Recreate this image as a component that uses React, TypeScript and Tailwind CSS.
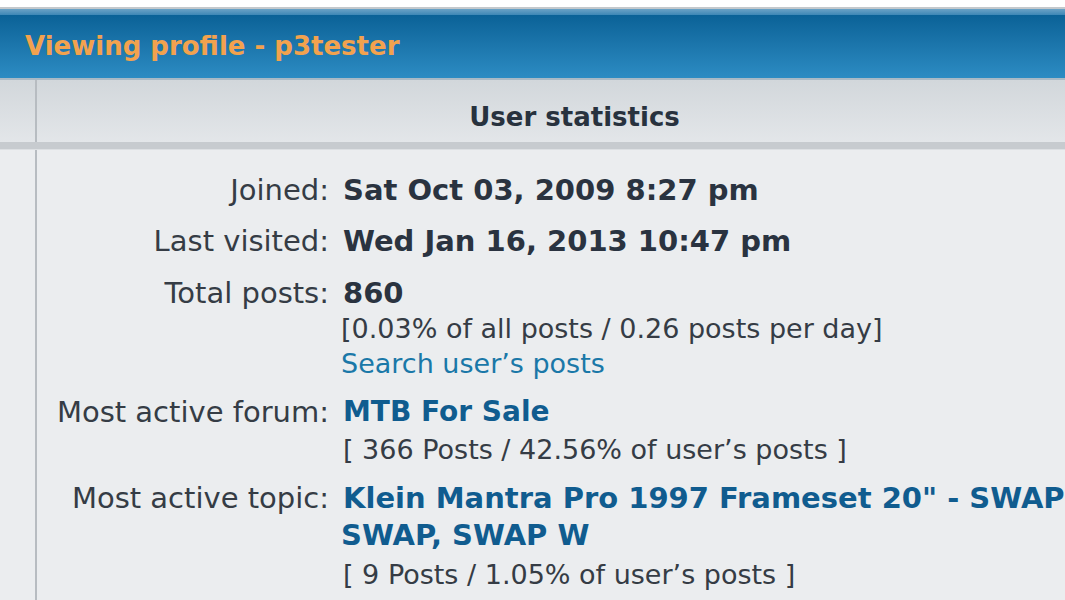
export default function App() {
  return (
    <div className="w-[1065px] h-[600px] overflow-hidden bg-white">
      <div className="w-[1112px] font-['DejaVu_Sans',Verdana,sans-serif]">
        <div className="h-[7px] bg-white" />
        <div className="h-[2px] bg-[#c3c8cc]" />
        <div className="h-[6px] bg-gradient-to-b from-[#6aa2c6] to-[#3c87b6]" />
        <div className="h-[63px] bg-gradient-to-b from-[#0a6297] to-[#2c8cc3] pl-[25px] pt-[16px]">
          <div className="text-[26px] leading-[30px] font-bold text-[#f2a24e] whitespace-nowrap">
            Viewing profile - p3tester
          </div>
        </div>
        <div className="h-[2px] bg-[#a9bac6]" />

        <div className="flex h-[62px] bg-gradient-to-b from-[#d2d7db] to-[#e3e6e9]">
          <div className="w-[37px] border-r-2 border-[#b7bcc1]" />
          <div className="flex-1 pt-[22px] text-center text-[26px] leading-[30px] font-bold text-[#28323e]">
            User statistics
          </div>
        </div>
        <div className="h-[7px] bg-[#c7cbcf]" />
        <div className="h-[1px] bg-[#dde0e3]" />

        <div className="flex h-[450px] bg-[#ebedef]">
          <div className="w-[37px] border-r-2 border-[#b7bcc1]" />
          <div className="flex-1 pt-[22px] text-[29px] text-[#353c45]">
            <Row label="Joined:">
              <div className="pl-[2px] leading-[36px] font-bold text-[#2a3340] whitespace-nowrap">Sat Oct 03, 2009 8:27 pm</div>
            </Row>
            <Row label="Last visited:" mt="mt-[15px]">
              <div className="pl-[2px] leading-[36px] font-bold text-[#2a3340] whitespace-nowrap">Wed Jan 16, 2013 10:47 pm</div>
            </Row>
            <Row label="Total posts:" mt="mt-[16px]">
              <div className="pl-[2px] leading-[36px] font-bold text-[#2a3340]">860</div>
              <div className="text-[27px] leading-[35px] text-[#353c45] whitespace-nowrap">
                [0.03% of all posts / 0.26 posts per day]
              </div>
              <div className="text-[27px] leading-[35px] text-[#1a78a8] whitespace-nowrap">Search user’s posts</div>
            </Row>
            <Row label="Most active forum:" mt="mt-[13px]">
              <div className="pl-[2px] text-[28px] leading-[36px] font-bold text-[#105c8f] whitespace-nowrap">MTB For Sale</div>
              <div className="pl-[2px] text-[27px] leading-[40px] text-[#353c45] whitespace-nowrap">
                [ 366 Posts / 42.56% of user’s posts ]
              </div>
            </Row>
            <Row label="Most active topic:" mt="mt-[10px]">
              <div className="pl-[2px] text-[29px] leading-[36px] font-bold text-[#105c8f] whitespace-nowrap">
                Klein Mantra Pro 1997 Frameset 20" - SWAP
              </div>
              <div className="text-[29px] leading-[38px] font-bold text-[#105c8f] whitespace-nowrap">SWAP, SWAP W</div>
              <div className="pl-[2px] text-[27px] leading-[42px] text-[#353c45] whitespace-nowrap">
                [ 9 Posts / 1.05% of user’s posts ]
              </div>
            </Row>
          </div>
        </div>
      </div>
    </div>
  );
}

function Row({ label, mt = "", children }: { label: string; mt?: string; children: React.ReactNode }) {
  return (
    <div className={`grid grid-cols-[292px_1fr] gap-x-[12px] items-start ${mt}`}>
      <div className="text-right leading-[36px] whitespace-nowrap">{label}</div>
      <div className="flex flex-col">{children}</div>
    </div>
  );
}
